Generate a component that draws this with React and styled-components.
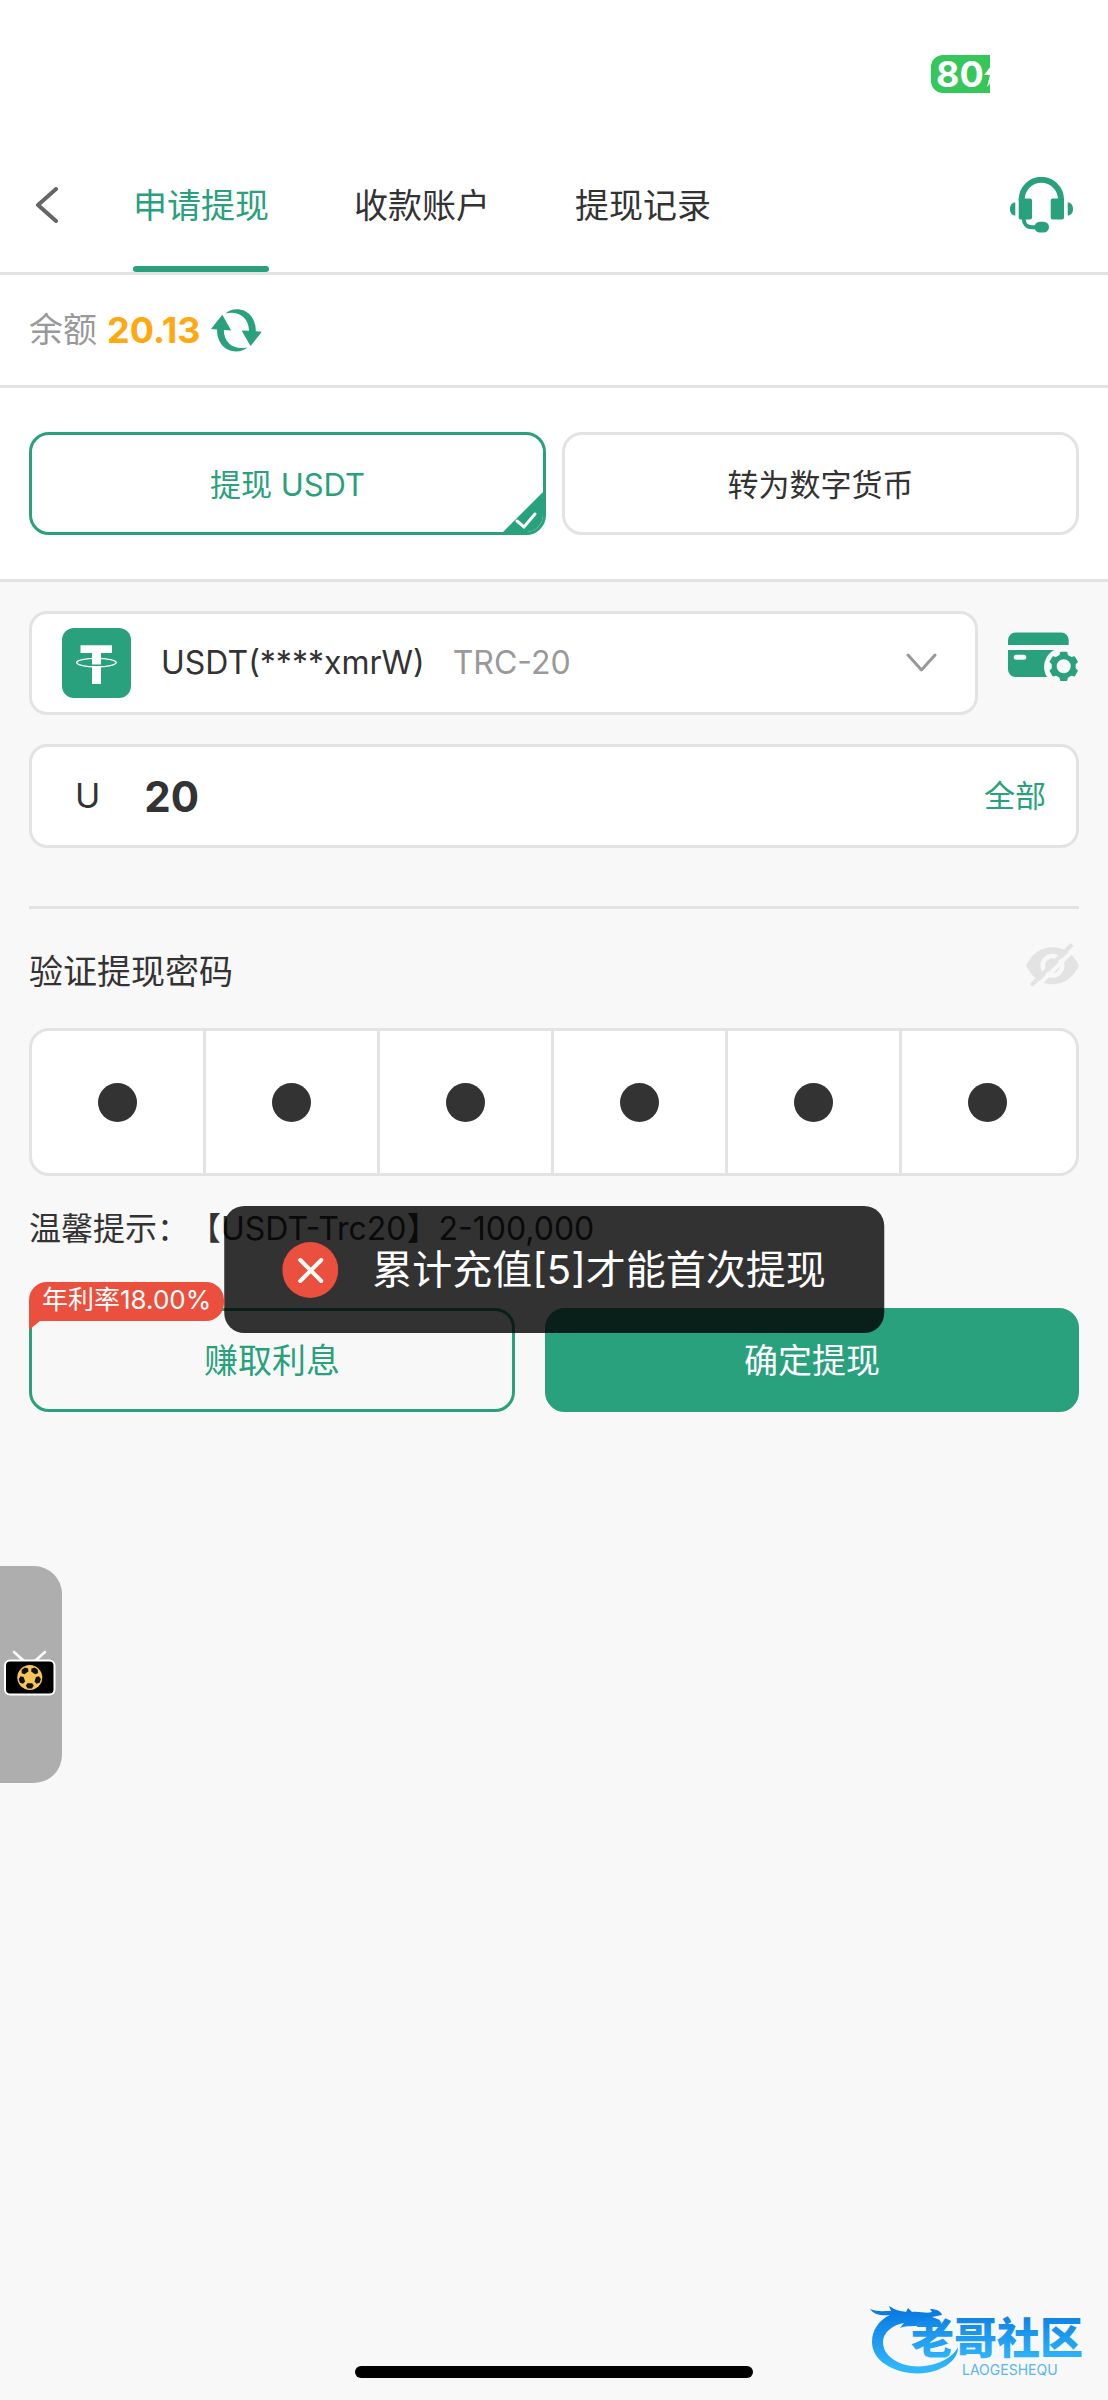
import React, { useState } from "react";
import styled, { createGlobalStyle, css } from "styled-components";

const green = "#28a17c";
const line = "#e3e3e3";
const ink = "#333333";
const muted = "#999999";
const red = "#eb4f3d";

const GlobalStyle = createGlobalStyle`
  *, *::before, *::after { box-sizing: border-box; }
  body {
    margin: 0;
    background: #f8f8f8;
    color: ${ink};
    font-family: Inter, "Noto Sans CJK SC", sans-serif;
    font-size: 34px;
    line-height: 40px;
  }
  button, input, select {
    margin: 0;
    padding: 0;
    border: 0;
    background: none;
    color: inherit;
    font: inherit;
  }
  svg { display: block; flex: none; }
`;

const Page = styled.div`
  position: relative;
  display: flex;
  flex-direction: column;
  min-height: 100vh;
`;

const StatusBar = styled.div`
  display: flex;
  justify-content: flex-end;
  height: 138px;
  padding: 55px 118px 0 0;
  background: #fff;
`;

const Battery = styled.div`
  display: flex;
  align-items: center;
  justify-content: space-between;
  width: 59px;
  height: 38px;
  padding-left: 5px;
  border-radius: 12px 0 0 12px;
  background: #35c759;
  color: #fff;
  font-size: 36px;
  font-weight: 700;
  line-height: 38px;
`;

const Header = styled.header`
  display: flex;
  align-items: center;
  height: 137px;
  padding: 0 35px;
  border-bottom: 3px solid ${line};
  background: #fff;
`;

const IconButton = styled.button`
  display: flex;
  align-items: center;
  cursor: pointer;
`;

const Tabs = styled.nav`
  display: flex;
  flex: 1;
  align-self: stretch;
  gap: 85px;
  margin-left: 74px;
`;

const Tab = styled.button`
  display: flex;
  align-items: center;
  position: relative;
  padding-top: 2px;
  color: ${(p) => (p.$active ? green : ink)};
  ${(p) =>
    p.$active &&
    css`
      &::after {
        content: "";
        position: absolute;
        left: 0;
        right: 0;
        bottom: 0;
        height: 6px;
        border-radius: 3px;
        background: ${green};
      }
    `}
`;

const Balance = styled.section`
  display: flex;
  align-items: center;
  height: 113px;
  padding: 0 29px;
  border-bottom: 3px solid ${line};
  background: #fff;
  color: ${muted};
`;

const BalanceValue = styled.strong`
  margin: 0 11px 0 10px;
  color: #ffa810;
  font-size: 36px;
  font-weight: 700;
`;

const Modes = styled.section`
  display: grid;
  grid-template-columns: 1fr 1fr;
  gap: 16px;
  padding: 44px 29px;
  border-bottom: 3px solid ${line};
  background: #fff;
`;

const Mode = styled.button`
  position: relative;
  height: 103px;
  padding-top: 2px;
  overflow: hidden;
  border: 3px solid ${(p) => (p.$active ? green : line)};
  border-radius: 20px;
  color: ${(p) => (p.$active ? green : ink)};
  font-size: 31px;
`;

const Corner = styled.svg`
  position: absolute;
  right: -1px;
  bottom: -1px;
`;

const Main = styled.main`
  display: flex;
  flex-direction: column;
  padding: 29px 29px 0;
`;

const AccountRow = styled.div`
  display: flex;
  align-items: flex-start;
  gap: 30px;
  margin-bottom: 29px;
`;

const ManageButton = styled(IconButton)`
  height: 92px;
`;

const Field = styled.label`
  display: flex;
  flex: 1;
  align-items: center;
  min-width: 0;
  height: 104px;
  padding: 0 30px;
  border: 3px solid ${line};
  border-radius: 18px;
  background: #fff;
`;

const AccountSelect = styled.select`
  margin: 0 28px 0 30px;
  appearance: none;
  field-sizing: content;
  outline: none;
  font-size: 32px;
`;

const Network = styled.span`
  flex: 1;
  color: ${muted};
  font-size: 32px;
`;

const AccountField = styled(Field)`
  padding-right: 38px;
`;

const AmountField = styled(Field)`
  flex: none;
  padding-left: 43px;
`;

const AmountInput = styled.input`
  flex: 1;
  min-width: 0;
  margin-left: 44px;
  outline: none;
  font-size: 42px;
  font-weight: 700;
`;

const AllButton = styled.button`
  color: ${green};
  font-size: 31px;
`;

const Divider = styled.hr`
  width: 100%;
  height: 3px;
  margin: 58px 0 34px;
  border: 0;
  background: ${line};
`;

const PasswordHead = styled.div`
  display: flex;
  align-items: flex-start;
  justify-content: space-between;
  height: 85px;
  line-height: 58px;
`;

const PinBox = styled.div`
  position: relative;
  display: grid;
  grid-template-columns: repeat(6, 1fr);
  height: 148px;
  border: 3px solid ${line};
  border-radius: 20px;
  background: #fff;
`;

const PinCell = styled.span`
  display: flex;
  align-items: center;
  justify-content: center;
  border-right: 3px solid ${line};
  &:last-of-type { border-color: transparent; }
`;

const Dot = styled.i`
  width: 39px;
  height: 39px;
  border-radius: 50%;
  background: ${ink};
`;

const PinInput = styled.input`
  position: absolute;
  inset: 0;
  width: 100%;
  opacity: 0;
`;

const Hint = styled.p`
  margin: 33px 0 59px;
  font-size: 32px;
  text-spacing-trim: space-all;
`;

const Actions = styled.div`
  display: flex;
  gap: 30px;
`;

const Action = styled.button`
  position: relative;
  flex: ${(p) => (p.$primary ? 11 : 10)} 1 0;
  height: 104px;
  padding-top: 2px;
  border: 3px solid ${green};
  border-radius: 20px;
  background: ${(p) => (p.$primary ? green : "transparent")};
  color: ${(p) => (p.$primary ? "#fff" : green)};
`;

const RateBadge = styled.span`
  position: absolute;
  left: -3px;
  top: -29px;
  height: 39px;
  padding: 0 13px;
  border-radius: 18px 18px 18px 0;
  background: ${red};
  color: #fff;
  font-size: 26px;
  line-height: 36px;
  white-space: nowrap;
  &::after {
    content: "";
    position: absolute;
    left: 0;
    top: 100%;
    border-top: 9px solid ${red};
    border-right: 11px solid transparent;
  }
`;

const Toast = styled.div`
  position: absolute;
  top: 1206px;
  left: 50%;
  display: flex;
  align-items: center;
  gap: 34px;
  height: 127px;
  padding: 0 58px;
  border-radius: 20px;
  background: rgba(0, 0, 0, 0.8);
  color: #fff;
  font-size: 40px;
  white-space: nowrap;
  transform: translateX(-50%);
`;

const LiveButton = styled.button`
  position: absolute;
  top: 1566px;
  left: 0;
  display: flex;
  align-items: center;
  width: 62px;
  height: 217px;
  padding: 0 0 4px 4px;
  border-radius: 0 28px 28px 0;
  background: #aeaeae;
`;

const Brand = styled.svg`
  position: absolute;
  right: 14px;
  bottom: 20px;
`;

const HomeIndicator = styled.div`
  width: 36%;
  height: 12px;
  margin: auto auto 22px;
  border-radius: 6px;
  background: #000;
`;

const HeadsetIcon = () => (
  <svg width="63" height="56" viewBox="0 0 63 56" fill={green}>
    <path d="M11.7 24V22.5a19.6 19.6 0 0 1 39.3 0V24" fill="none" stroke={green} strokeWidth="6" />
    <path d="M8.700 21.500H20a2 2 0 0 1 2 2v17a2 2 0 0 1-2 2h-9.300a2 2 0 0 1-2-2zM54 21.500H42.700a2 2 0 0 0-2 2v17a2 2 0 0 0 2 2H52a2 2 0 0 0 2-2z" />
    <path d="M5.300 25.500C2 25.500 0 28 0 32s2 6.500 5.300 6.500zM57.700 25.500C61 25.500 63 28 63 32s-2 6.500-5.300 6.500z" />
    <path d="M13.800 42c0 5 3 8.200 8 8.200h5" fill="none" stroke={green} strokeWidth="4" />
    <rect x="24.500" y="44.800" width="14.500" height="10.700" rx="5.300" />
  </svg>
);

const halfArrow =
  "M11.3 5.7 0 20l6 .6C6 34 14 42.5 25 42.5c5 0 9-2 11.5-4.3C24 41.5 13 35 12.8 21l7.4.4z";

const RefreshIcon = () => (
  <svg width="51" height="43" viewBox="0 0 51 43" fill={green}>
    <path d={halfArrow} />
    <path d={halfArrow} transform="rotate(180 25.4 21.4)" />
  </svg>
);

const TetherIcon = () => (
  <svg width="69" height="70" viewBox="0 0 69 70">
    <rect width="69" height="70" rx="12" fill={green} />
    <path d="M18.5 17.2H50V25H39v11.5h-9V25H18.5zM30 38.8h9V56h-9z" fill="#fff" />
    <ellipse cx="34.4" cy="34.6" rx="19.8" ry="4.2" fill="none" stroke="#fff" strokeWidth="1.4" />
  </svg>
);

const CardGearIcon = () => (
  <svg width="71" height="50" viewBox="0 0 71 50" fill={green}>
    <path d="M0 13V8a7.5 7.5 0 0 1 7.5-7.5h45.7A7.5 7.5 0 0 1 60.7 8v5z" />
    <path
      fillRule="evenodd"
      d="M0 18h46A19.2 19.2 0 0 0 39 45H7.500A7.500 7.500 0 0 1 0 37.500zM8.200 22.700a2.500 2.500 0 0 0 0 5h7.600a2.500 2.500 0 0 0 0-5z"
    />
    <circle cx="55.7" cy="34.300" r="9.500" fill="none" stroke={green} strokeWidth="5" />
    {[0, 60, 120, 180, 240, 300].map((a) => (
      <path key={a} d="M50.800 25.500 52.200 20.200Q52.400 19.700 53 19.700h5.400q.600 0 .800.500l1.400 5.300z" transform={`rotate(${a} 55.7 34.3)`} />
    ))}
  </svg>
);

const EyeOffIcon = () => (
  <svg width="53" height="44" viewBox="0 0 53 44">
    <path d="M0 22.600C6 10.500 15 4.300 26.500 4.300S47 10.500 53 22.600C47 35 38 41.300 26.500 41.300S6 35 0 22.600z" fill={line} />
    <circle cx="26.400" cy="22.700" r="9.700" fill="none" stroke="#f8f8f8" strokeWidth="4.600" />
    <path d="M49.500 5 10 44.500" stroke="#f8f8f8" strokeWidth="4" />
    <path d="M46 1.500 5.200 42.300" stroke={line} strokeWidth="4" />
  </svg>
);

const TvBallIcon = () => (
  <svg width="52" height="46" viewBox="0 0 52 46">
    <path d="m10 2 10 9M41 2 31 11" stroke="#fff" strokeWidth="2.600" strokeLinecap="round" />
    <rect x="1" y="10.500" width="49.500" height="34" rx="5" fill="#000" stroke="#fff" strokeWidth="2" />
    <circle cx="25.800" cy="27.500" r="12.500" fill="#f7c659" />
    <g fill="#111">
      {[0, 72, 144, 216, 288].map((a) => (
        <path key={a} d="M23.400 33.200h4.800l1.600 2.600-2 2.700h-4l-2-2.700z" transform={`rotate(${a} 25.8 27.5)`} />
      ))}
    </g>
  </svg>
);

const BrandLogo = () => (
  <Brand width="226" height="80" viewBox="0 0 226 80" role="img" aria-label="老哥社区">
    <defs>
      <linearGradient id="brandBlue" x1="0" y1="0" x2="0" y2="1">
        <stop offset="0.1" stopColor="#0a7be2" />
        <stop offset="0.9" stopColor="#2fb6fb" />
      </linearGradient>
    </defs>
    <path
      fill="url(#brandBlue)"
      d="M2 9c7 3 13 2 21 2l-2-5c6 4 11 5 17 6l2-4 4 4c8-1 14 2 20 0l-2-3c6 0 11 2 12 6l-10 2 8 3-1 3c-7-2-13 1-19 2-6 2-12 0-20 3l4-5c-12 2-21 10-21 19 0 14 15 24 35 24.500 18-.500 34-7.500 40-19.500 0 15-18 26-40 26.500C24 73 4 60 4 42c0-12 7-22 18-27-8 1-16 0-20-6z"
    />
    <text x="43" y="54" fill="url(#brandBlue)" fontFamily='"Noto Sans CJK SC", sans-serif' fontSize="43" fontWeight="900">
      老哥社区
    </text>
    <text x="94" y="75" fill="#58b4f2" fontFamily="Inter, sans-serif" fontSize="14">
      LAOGESHEQU
    </text>
  </Brand>
);

const tabNames = ["申请提现", "收款账户", "提现记录"];

export default function App() {
  const [tab, setTab] = useState(0);
  const [mode, setMode] = useState(0);
  const [amount, setAmount] = useState("20");
  const [pin, setPin] = useState("000000");

  return (
    <Page>
      <GlobalStyle />
      <StatusBar>
        <Battery>
          <span>80</span>
          <svg width="7" height="26" viewBox="0 0 7 26">
            <path d="M11 0 0 14h6L3 26l13-15V0z" fill="#fff" />
          </svg>
        </Battery>
      </StatusBar>

      <Header>
        <IconButton aria-label="返回">
          <svg width="24" height="36" viewBox="0 0 24 36" fill="none" stroke="#666" strokeWidth="4" strokeLinecap="round" strokeLinejoin="round">
            <path d="M21 2 3 18l18 16" />
          </svg>
        </IconButton>
        <Tabs>
          {tabNames.map((name, i) => (
            <Tab key={name} $active={tab === i} onClick={() => setTab(i)}>
              {name}
            </Tab>
          ))}
        </Tabs>
        <IconButton aria-label="客服">
          <HeadsetIcon />
        </IconButton>
      </Header>

      <Balance>
        余额<BalanceValue>20.13</BalanceValue>
        <IconButton aria-label="刷新">
          <RefreshIcon />
        </IconButton>
      </Balance>

      <Modes>
        {["提现 USDT", "转为数字货币"].map((name, i) => (
          <Mode key={name} $active={mode === i} onClick={() => setMode(i)}>
            {name}
            {mode === i && (
              <Corner width="42" height="42" viewBox="0 0 42 42">
                <path d="M42 0v42H0z" fill={green} />
                <path d="m15 30 7 6 11-13" fill="none" stroke="#fff" strokeWidth="3" strokeLinecap="round" />
              </Corner>
            )}
          </Mode>
        ))}
      </Modes>

      <Main>
        <AccountRow>
          <AccountField>
            <TetherIcon />
            <AccountSelect aria-label="收款账户">
              <option>USDT(****xmrW)</option>
            </AccountSelect>
            <Network>TRC-20</Network>
            <svg width="31" height="20" viewBox="0 0 31 20" fill="none" stroke={muted} strokeWidth="3" strokeLinecap="round" strokeLinejoin="round">
              <path d="m2 2 13.500 15L29 2" />
            </svg>
          </AccountField>
          <ManageButton aria-label="管理账户">
            <CardGearIcon />
          </ManageButton>
        </AccountRow>

        <AmountField>
          U
          <AmountInput value={amount} inputMode="decimal" onChange={(e) => setAmount(e.target.value)} />
          <AllButton type="button" onClick={() => setAmount("20.13")}>
            全部
          </AllButton>
        </AmountField>

        <Divider />

        <PasswordHead>
          <label htmlFor="pin">验证提现密码</label>
          <IconButton aria-label="显示密码">
            <EyeOffIcon />
          </IconButton>
        </PasswordHead>
        <PinBox>
          {[0, 1, 2, 3, 4, 5].map((i) => (
            <PinCell key={i}>{i < pin.length && <Dot />}</PinCell>
          ))}
          <PinInput id="pin" type="password" maxLength={6} value={pin} onChange={(e) => setPin(e.target.value)} />
        </PinBox>

        <Hint>温馨提示：【USDT-Trc20】2-100,000</Hint>

        <Actions>
          <Action>
            <RateBadge>年利率18.00%</RateBadge>
            赚取利息
          </Action>
          <Action $primary>确定提现</Action>
        </Actions>
      </Main>

      <HomeIndicator />

      <Toast role="alert">
        <svg width="56" height="56" viewBox="0 0 56 56">
          <circle cx="28" cy="28" r="28" fill={red} />
          <path d="m18 18 21 21M39 18 18 39" stroke="#fff" strokeWidth="4" strokeLinecap="round" />
        </svg>
        累计充值[5]才能首次提现
      </Toast>

      <LiveButton aria-label="直播">
        <TvBallIcon />
      </LiveButton>

      <BrandLogo />
    </Page>
  );
}
